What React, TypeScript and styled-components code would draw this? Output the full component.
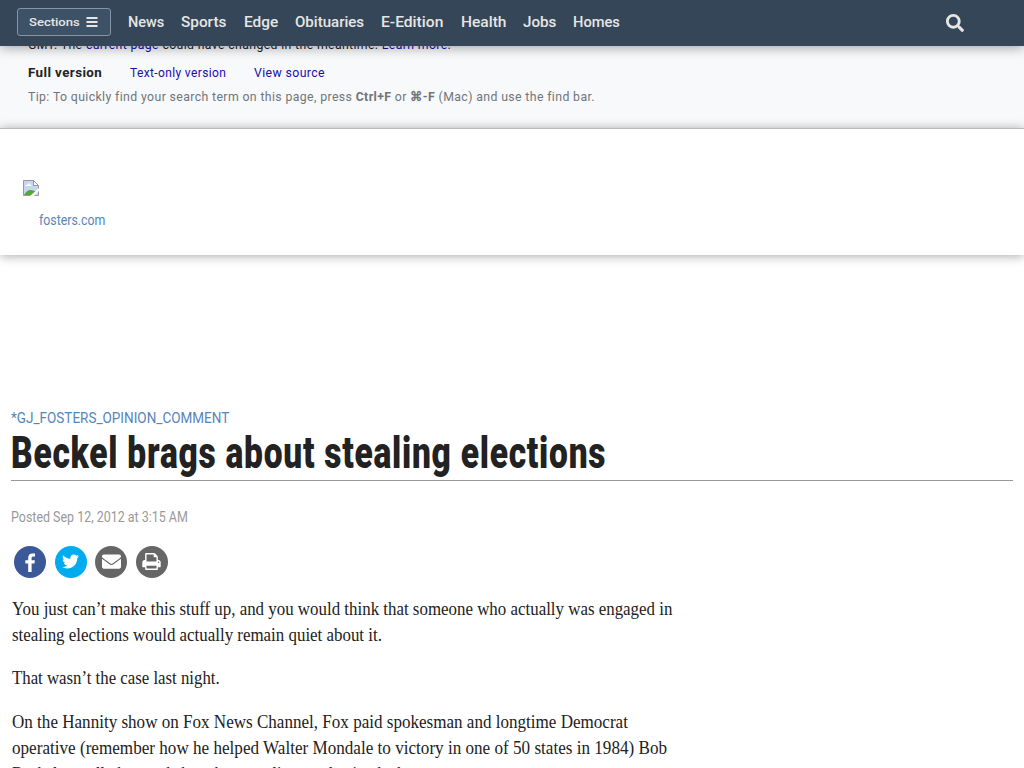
import React, { useLayoutEffect, useRef, useState } from 'react';
import styled, { createGlobalStyle } from 'styled-components';
import { FaEnvelope, FaSearch, FaTwitter } from 'react-icons/fa';

const GlobalStyle = createGlobalStyle`
  * { box-sizing: border-box; }
  html, body { margin: 0; height: 768px; overflow: hidden; background: #fff; }
  p, h1 { margin: 0; }
  a { text-decoration: none; }
`;

const Page = styled.div`
  height: 768px;
  overflow: hidden;
  color: #222;
  font-family: 'Roboto', 'Liberation Sans', sans-serif;
`;
const TopBar = styled.header`
  position: relative;
  z-index: 3;
  display: flex;
  align-items: center;
  height: 46px;
  padding: 0 60px 2px 17px;
  background: #354658;
  box-shadow: 0 1px 12px rgba(0, 0, 0, 0.4);
`;
const SectionsButton = styled.button`
  display: flex;
  align-items: center;
  gap: 6px;
  width: 94px;
  height: 28px;
  padding: 0 0 0 11px;
  border: 1px solid #8494a5;
  border-radius: 3px;
  background: #3e5267;
  color: #e6e6e6;
  font: 500 11px 'Roboto', sans-serif;
  text-align: left;
`;
const Nav = styled.nav`
  display: flex;
  gap: 17px;
  margin: 1px 0 0 17px;
`;
const NavLink = styled.a`
  color: #e6e6e6;
  font-size: 14.5px;
  font-weight: 500;
  line-height: 21px;
`;
const SearchButton = styled.a`
  display: flex;
  margin: 2px 0 0 auto;
  color: #e6e6e6;
  svg { width: 18px; height: 18px; }
`;
const CacheBox = styled.section`
  height: 82px;
  padding-left: 28px;
  background: #f8f9fb;
  overflow: hidden;
  color: #222;
  font-size: 13px;
  letter-spacing: 0.4px;
  line-height: 16px;
  a { color: #1a0dab; }
`;
const CacheNote = styled.div`
  margin-top: -9px;
  height: 16px;
`;
const CacheLinks = styled.div`
  display: flex;
  gap: 28px;
  margin-top: 12px;
`;
const CacheTip = styled.div`
  margin-top: 8px;
  color: #70757a;
`;
const Masthead = styled.div`
  position: relative;
  z-index: 2;
  height: 127px;
  padding: 51px 0 0 23px;
  border-top: 1px solid #bbb;
  background: #fff;
  box-shadow: 0 1px 10px rgba(0, 0, 0, 0.35);
  svg { display: block; }
`;
const LogoText = styled.a`
  display: block;
  margin: 14px 0 0 16px;
  color: #5685b8;
  font-size: 14px;
  line-height: 20px;
`;
const Article = styled.main`
  padding: 153px 11px 0;
`;
const Category = styled.a`
  display: block;
  color: #5685b8;
  font-size: 15px;
  line-height: 20px;
`;
const Title = styled.h1`
  height: 53px;
  border-bottom: 1px solid #999;
  font-size: 45px;
  font-weight: 900;
  letter-spacing: 1px;
  line-height: 49px;
`;
const Posted = styled.div`
  margin-top: 26px;
  color: #999;
  font-size: 14px;
  line-height: 20px;
`;
const ShareRow = styled.div`
  display: flex;
  gap: 8.5px;
  margin: 19px 0 0 3px;
`;
const ShareLink = styled.a<{ $bg: string }>`
  display: flex;
  align-items: center;
  justify-content: center;
  width: 32px;
  height: 32px;
  padding-bottom: 1px;
  border-radius: 50%;
  background: ${({ $bg }) => $bg};
  color: #fff;
`;
const Paragraph = styled.p`
  margin-bottom: 17.3px;
  font-family: 'Liberation Serif', serif;
  font-size: 18px;
  line-height: 26px;
`;
const Body = styled.div`
  margin: 18px 0 0 0.5px;
`;
const FitBox = styled.span`
  display: block;
  white-space: nowrap;
`;
const FitInner = styled.span`
  display: inline-block;
  transform-origin: 0 50%;
`;

// Condenses or stretches one line of text to a set measure
const Fit: React.FC<{ width: number; children: React.ReactNode }> = ({ width, children }) => {
  const ref = useRef<HTMLSpanElement>(null);
  const [scale, setScale] = useState(1);

  useLayoutEffect(() => {
    if (ref.current) setScale(width / ref.current.offsetWidth);
  }, [width]);

  return (
    <FitBox style={{ width }}>
      <FitInner ref={ref} style={{ transform: `scaleX(${scale})` }}>{children}</FitInner>
    </FitBox>
  );
};

const navItems = [
  { label: 'News', width: 36 },
  { label: 'Sports', width: 45.5 },
  { label: 'Edge', width: 34 },
  { label: 'Obituaries', width: 69.5 },
  { label: 'E-Edition', width: 62.5 },
  { label: 'Health', width: 45 },
  { label: 'Jobs', width: 33.5 },
  { label: 'Homes', width: 46.5 },
];

const paragraphs = [
  [
    { text: 'You just can’t make this stuff up, and you would think that someone who actually was engaged in', width: 660 },
    { text: 'stealing elections would actually remain quiet about it.', width: 370 },
  ],
  [{ text: 'That wasn’t the case last night.', width: 208 }],
  [
    { text: 'On the Hannity show on Fox News Channel, Fox paid spokesman and longtime Democrat', width: 616 },
    { text: 'operative (remember how he helped Walter Mondale to victory in one of 50 states in 1984) Bob', width: 655 },
    { text: 'Beckel actually bragged about how stealing an election had won', width: 421 },
  ],
];

const BrokenImage = () => (
  <svg width="16" height="16" viewBox="0 0 16 16">
    <path d="M.5.5h10l5 5v10H.5z" fill="#c7d7f3" stroke="#999" />
    <path d="M10.5.5v5h5z" fill="#fff" stroke="#999" />
    <path d="M2.5 6c0-1 1-1.5 2-1.3C5 3 7 3 7.3 4.7 8.5 4.7 8.7 6 8.500 6z" fill="#fff" />
    <path d="M1 15c2-3.500 4-5 6.500-5S12 11 13 12l-3 3z" fill="#52a934" />
    <path d="M7 16l9-8v3l-5 5z" fill="#fff" />
  </svg>
);

const MenuIcon = () => (
  <svg width="12" height="10" viewBox="0 0 12 10" stroke="currentColor" strokeWidth="2">
    <path d="M0.500 1h11M0.500 5h11M0.500 9h11" />
  </svg>
);

const FacebookIcon = () => (
  <svg width="20" height="20" viewBox="0 0 1792 1792" fill="currentColor">
    <path d="M1343 140v264h-157q-86 0-116 36t-30 108v189h293l-39 296h-254v759H734v-759H479V737h255V519q0-186 104-288.500T1115 128q147 0 228 12z" />
  </svg>
);

const PrintIcon = () => (
  <svg width="19" height="17" viewBox="0 0 1664 1536" fill="currentColor">
    <path d="M384 1408h896v-256H384v256zm0-640h896V384h-160q-40 0-68-28t-28-68V128H384v640zm1152 64q0-26-19-45t-45-19-45 19-19 45 19 45 45 19 45-19 19-45zm128 0v416q0 13-9.500 22.500t-22.500 9.500h-224v160q0 40-28 68t-68 28H352q-40 0-68-28t-28-68v-160H32q-13 0-22.500-9.500T0 1248V832q0-79 56.500-135.500T192 640h64V96q0-40 28-68t68-28h672q40 0 88 20t76 48l152 152q28 28 48 76t20 88v256h64q79 0 135.500 56.500T1664 832z" />
  </svg>
);

const App: React.FC = () => (
  <Page>
    <GlobalStyle />
    <TopBar>
      <SectionsButton><Fit width={51}>Sections</Fit><MenuIcon /></SectionsButton>
      <Nav>
        {navItems.map((item) => (
          <NavLink key={item.label}><Fit width={item.width}>{item.label}</Fit></NavLink>
        ))}
      </Nav>
      <SearchButton aria-label="Search"><FaSearch /></SearchButton>
    </TopBar>
    <CacheBox>
      <CacheNote>
        <Fit width={423}>GMT. The <a>current page</a> could have changed in the meantime. <a>Learn more.</a></Fit>
      </CacheNote>
      <CacheLinks>
        <Fit width={74}><b>Full version</b></Fit>
        <a><Fit width={96}>Text-only version</Fit></a>
        <a><Fit width={71}>View source</Fit></a>
      </CacheLinks>
      <CacheTip>
        <Fit width={567}>Tip: To quickly find your search term on this page, press <b>Ctrl+F</b> or <b>⌘-F</b> (Mac) and use the find bar.</Fit>
      </CacheTip>
    </CacheBox>
    <Masthead>
      <BrokenImage />
      <LogoText><Fit width={66}>fosters.com</Fit></LogoText>
    </Masthead>
    <Article>
      <Category><Fit width={218}>*GJ_FOSTERS_OPINION_COMMENT</Fit></Category>
      <Title><Fit width={595}>Beckel brags about stealing elections</Fit></Title>
      <Posted><Fit width={177}>Posted Sep 12, 2012 at 3:15 AM</Fit></Posted>
      <ShareRow>
        <ShareLink $bg="#3b5998" aria-label="Facebook"><FacebookIcon /></ShareLink>
        <ShareLink $bg="#00aced" aria-label="Twitter"><FaTwitter size={17} /></ShareLink>
        <ShareLink $bg="#666" aria-label="Email"><FaEnvelope size={19} /></ShareLink>
        <ShareLink $bg="#666" aria-label="Print"><PrintIcon /></ShareLink>
      </ShareRow>
      <Body>
        {paragraphs.map((lines) => (
          <Paragraph key={lines[0].text}>
            {lines.map((line) => (
              <Fit key={line.text} width={line.width}>{line.text}</Fit>
            ))}
          </Paragraph>
        ))}
      </Body>
    </Article>
  </Page>
);

export default App;
